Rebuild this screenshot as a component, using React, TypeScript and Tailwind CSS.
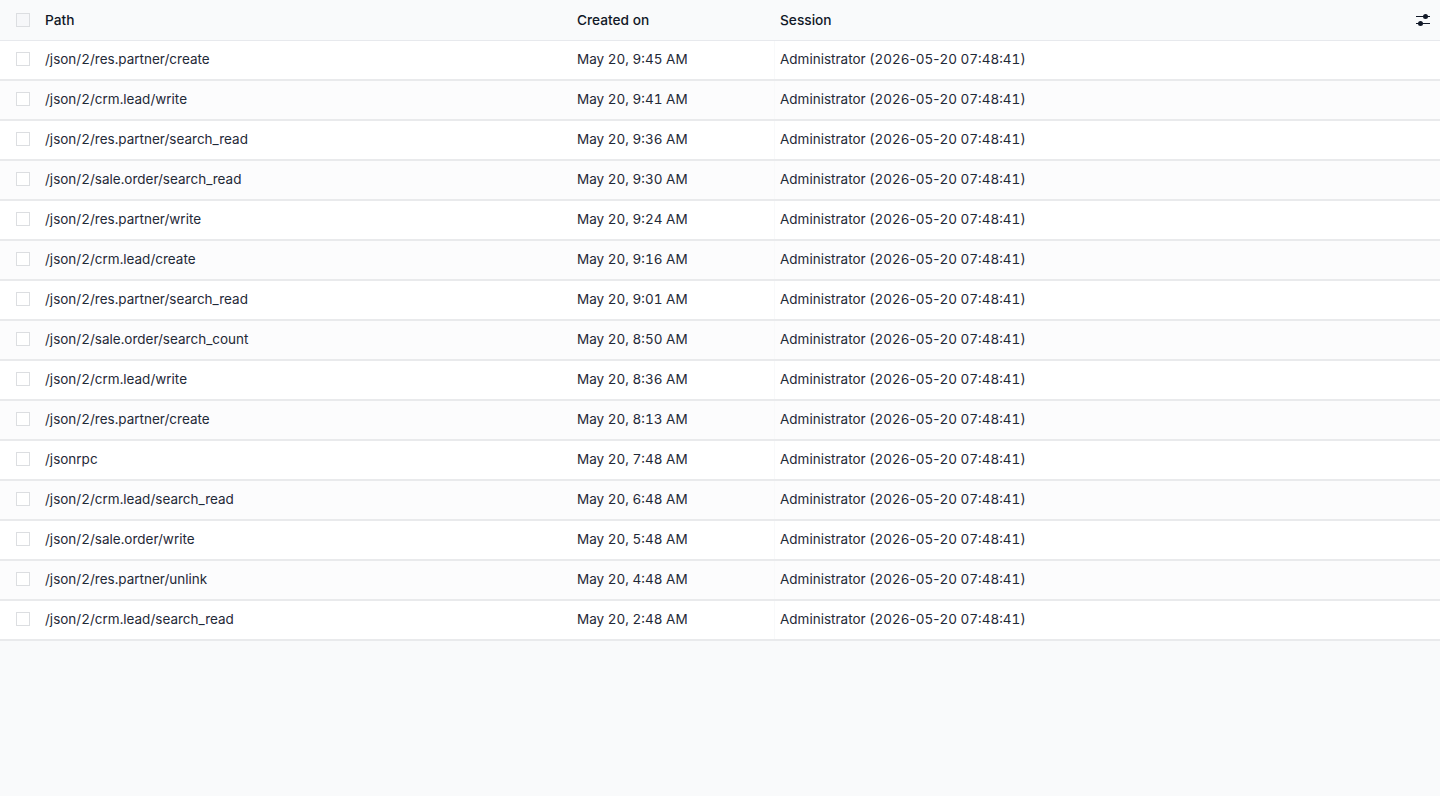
const rows = [
  ["/json/2/res.partner/create", "May 20, 9:45 AM"],
  ["/json/2/crm.lead/write", "May 20, 9:41 AM"],
  ["/json/2/res.partner/search_read", "May 20, 9:36 AM"],
  ["/json/2/sale.order/search_read", "May 20, 9:30 AM"],
  ["/json/2/res.partner/write", "May 20, 9:24 AM"],
  ["/json/2/crm.lead/create", "May 20, 9:16 AM"],
  ["/json/2/res.partner/search_read", "May 20, 9:01 AM"],
  ["/json/2/sale.order/search_count", "May 20, 8:50 AM"],
  ["/json/2/crm.lead/write", "May 20, 8:36 AM"],
  ["/json/2/res.partner/create", "May 20, 8:13 AM"],
  ["/jsonrpc", "May 20, 7:48 AM"],
  ["/json/2/crm.lead/search_read", "May 20, 6:48 AM"],
  ["/json/2/sale.order/write", "May 20, 5:48 AM"],
  ["/json/2/res.partner/unlink", "May 20, 4:48 AM"],
  ["/json/2/crm.lead/search_read", "May 20, 2:48 AM"],
];

function Checkbox({ header }: { header?: boolean }) {
  return <span className={`block w-3.5 h-3.5 border border-[#dcdee1] ${header ? "bg-[#f6f7f9]" : "bg-white"}`} />;
}

export default function App() {
  return (
    <div className="min-h-[796px] bg-[#f9fafb] font-['Inter',sans-serif] text-[13.5px] tabular-nums text-[#1f2937]">
      {/* Header */}
      <div className="flex items-center h-[41px] border-b border-[#e7e9ed] text-[13.7px] text-[#111827] font-medium">
        <div className="w-[45px] pl-4 shrink-0">
          <Checkbox header />
        </div>
        <div className="w-[532px] shrink-0">Path</div>
        <div className="w-[203px] shrink-0">Created on</div>
        <div className="flex-1">Session</div>
        <div className="pr-2.5">
          <svg width="14" height="14" viewBox="0 0 14 14" className="text-[#111827]" fill="currentColor">
            <rect x="0" y="3" width="14" height="1" />
            <circle cx="9.5" cy="3.5" r="2.5" />
            <rect x="0" y="10" width="14" height="1" />
            <circle cx="4.5" cy="10.5" r="2.5" />
          </svg>
        </div>
      </div>

      {/* Rows */}
      {rows.map(([path, created], i) => (
        <div
          key={i}
          className={`flex items-center h-10 border-b-2 border-[#e9eaec] ${i % 2 === 0 ? "bg-white" : "bg-[#fcfcfd]"}`}
        >
          <div className="w-[45px] pl-4 pb-0.5 shrink-0">
            <Checkbox />
          </div>
          <div className="w-[532px] pb-0.5 shrink-0">{path}</div>
          <div className="w-[197px] pb-0.5 shrink-0">{created}</div>
          <div className="flex-1 self-stretch flex items-center pb-0.5 pl-[5px] border-l border-[#f8f9fa]">
            <span>
              Administrator (2026<span className="[font-variant-numeric:normal]">-</span>05
              <span className="[font-variant-numeric:normal]">-</span>20 07:48:41)
            </span>
          </div>
        </div>
      ))}
    </div>
  );
}
